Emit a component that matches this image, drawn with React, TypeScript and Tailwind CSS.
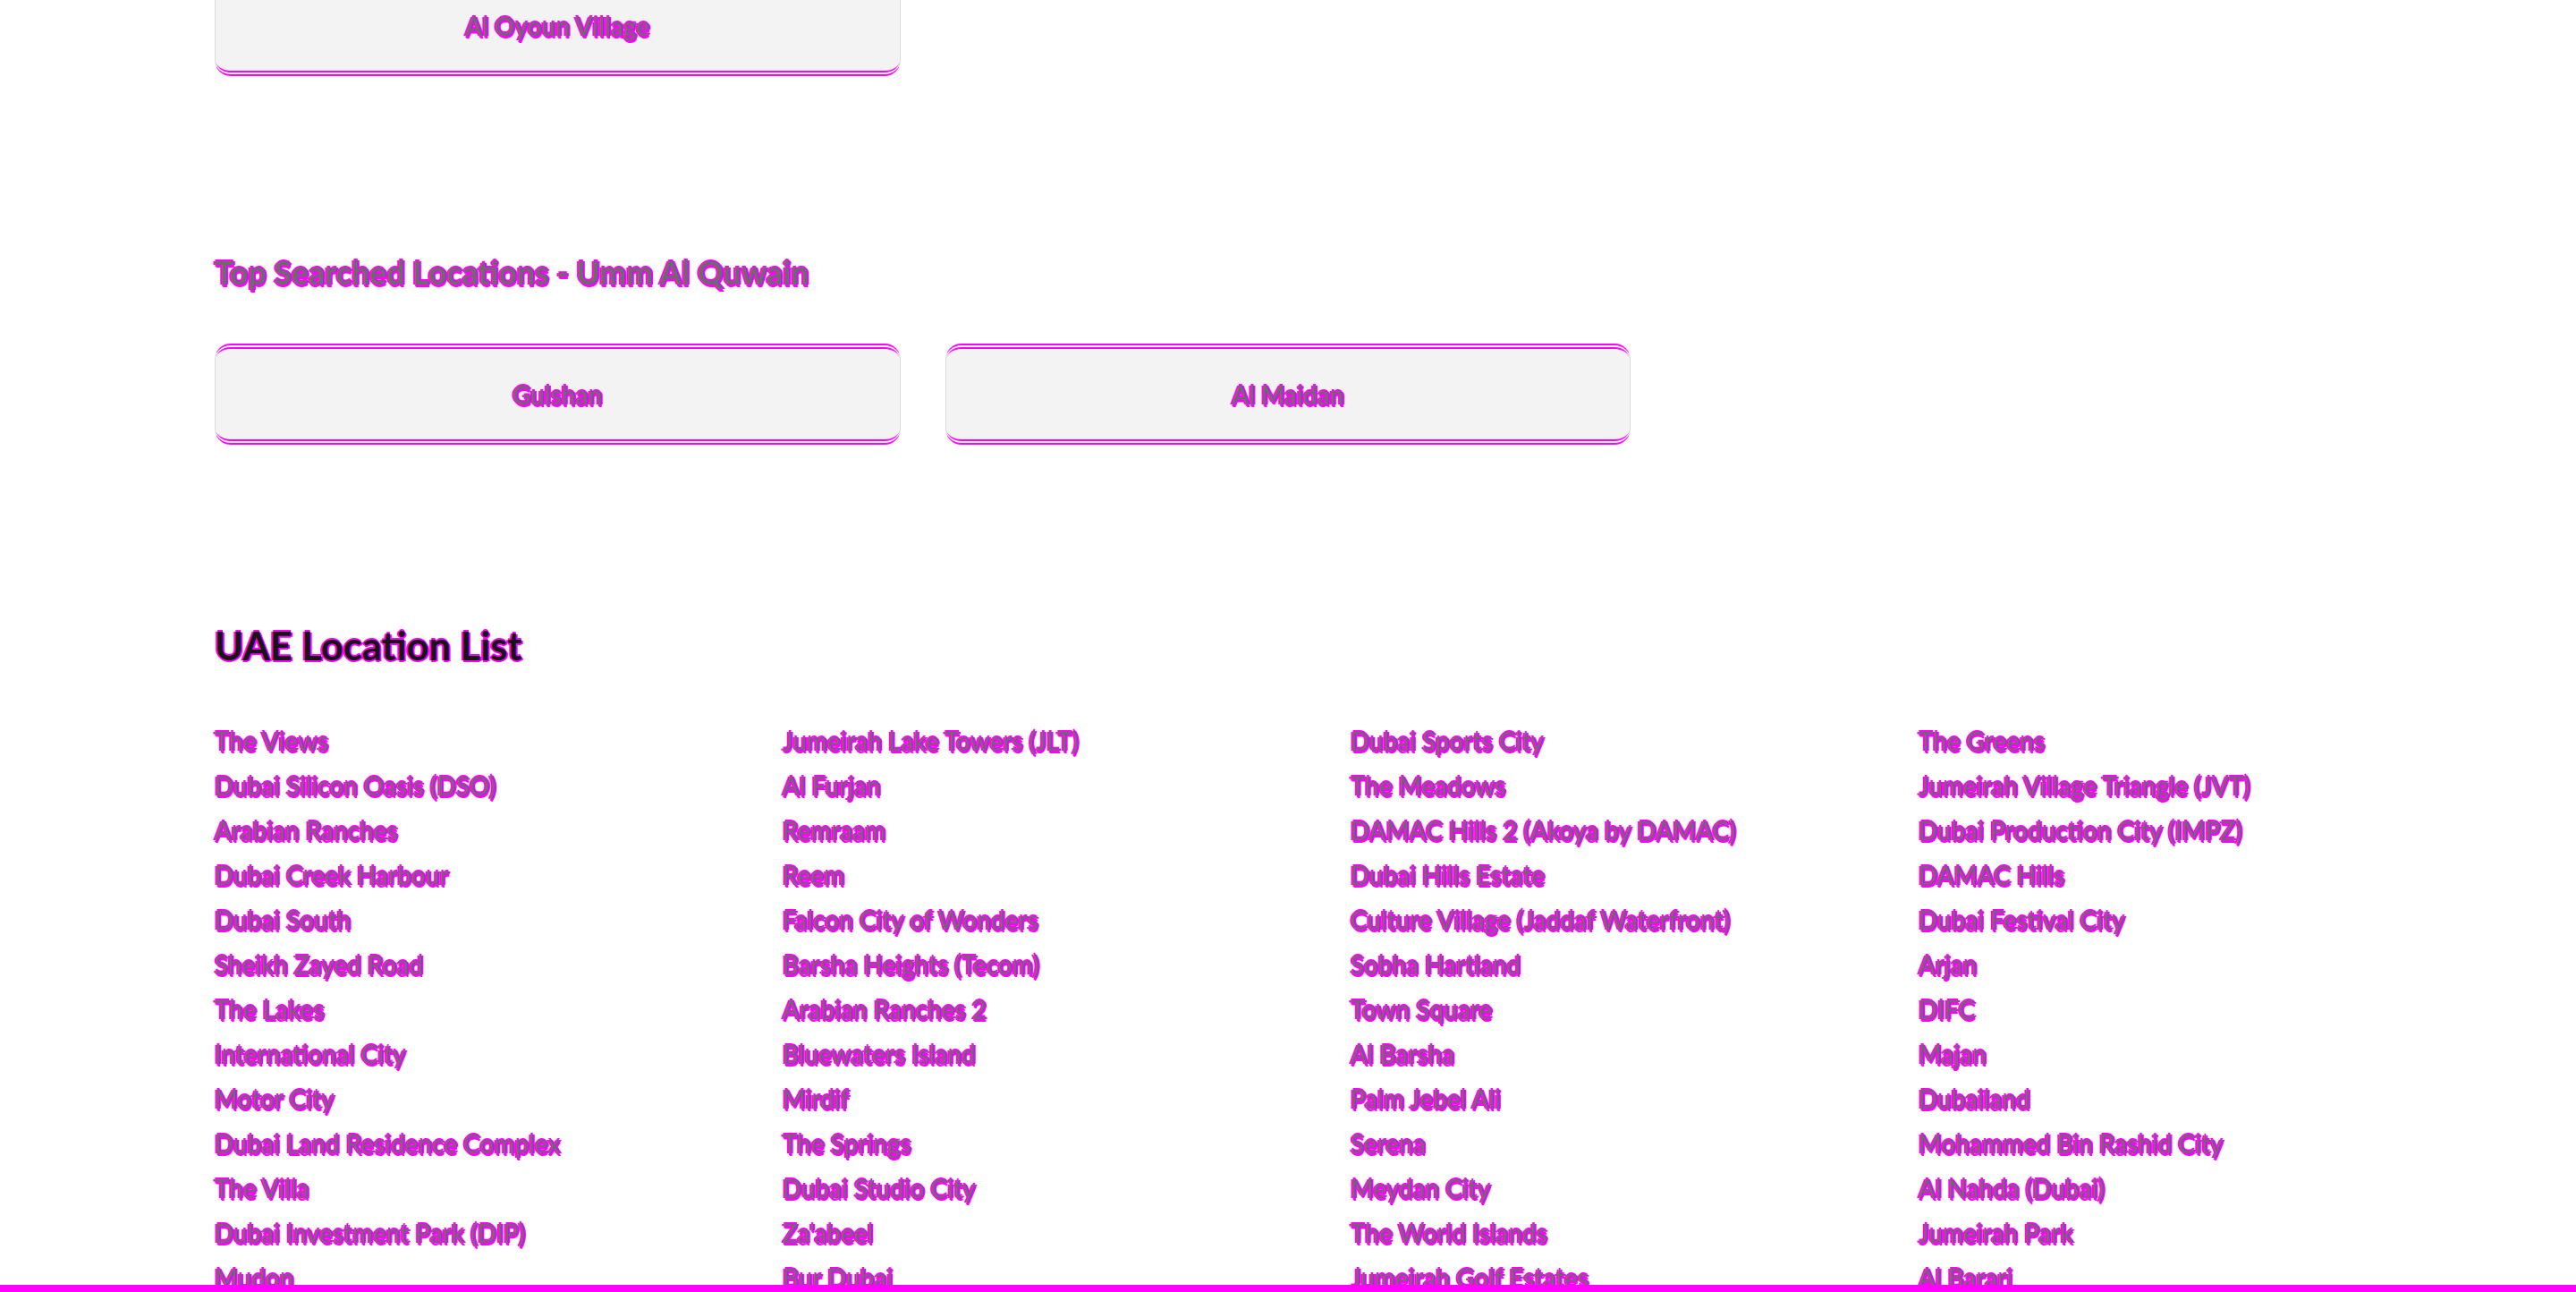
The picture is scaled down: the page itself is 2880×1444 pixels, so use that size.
import React from 'react';

const umm = ['Gulshan', 'Al Maidan'];

const columns: string[][] = [
  [
    'The Views',
    'Dubai Silicon Oasis (DSO)',
    'Arabian Ranches',
    'Dubai Creek Harbour',
    'Dubai South',
    'Sheikh Zayed Road',
    'The Lakes',
    'International City',
    'Motor City',
    'Dubai Land Residence Complex',
    'The Villa',
    'Dubai Investment Park (DIP)',
    'Mudon',
  ],
  [
    'Jumeirah Lake Towers (JLT)',
    'Al Furjan',
    'Remraam',
    'Reem',
    'Falcon City of Wonders',
    'Barsha Heights (Tecom)',
    'Arabian Ranches 2',
    'Bluewaters Island',
    'Mirdif',
    'The Springs',
    'Dubai Studio City',
    "Za'abeel",
    'Bur Dubai',
  ],
  [
    'Dubai Sports City',
    'The Meadows',
    'DAMAC Hills 2 (Akoya by DAMAC)',
    'Dubai Hills Estate',
    'Culture Village (Jaddaf Waterfront)',
    'Sobha Hartland',
    'Town Square',
    'Al Barsha',
    'Palm Jebel Ali',
    'Serena',
    'Meydan City',
    'The World Islands',
    'Jumeirah Golf Estates',
  ],
  [
    'The Greens',
    'Jumeirah Village Triangle (JVT)',
    'Dubai Production City (IMPZ)',
    'DAMAC Hills',
    'Dubai Festival City',
    'Arjan',
    'DIFC',
    'Majan',
    'Dubailand',
    'Mohammed Bin Rashid City',
    'Al Nahda (Dubai)',
    'Jumeirah Park',
    'Al Barari',
  ],
];

// grey glyphs inside a magenta halo, as in the capture
const pink =
  'text-[#6b6b6b] [text-shadow:0_-2px_0_#ff00ff,0_2px_0_#ff00ff,-2px_0_0_#ff00ff,2px_0_0_#ff00ff,1px_3px_0_#ff00ff]';
const halo =
  '[text-shadow:0_-2px_0_#ff00ff,0_2px_0_#ff00ff,-2px_0_0_#ff00ff,2px_1px_0_#ff00ff]';

function LocationCard({ name }: { name: string }) {
  return (
    <a
      href="#"
      className={`flex h-[113px] items-center justify-center rounded-[18px] border-x border-y-[6px] border-double border-x-[#dcdcdc] border-y-[#ff00ff] bg-[#f3f3f3] bg-clip-padding text-[28px] font-semibold ${pink}`}
    >
      {name}
    </a>
  );
}

export default function App() {
  return (
    <div className="min-h-screen overflow-hidden bg-white font-['Lato','Liberation_Sans',sans-serif]">
      <div className="mx-auto -mt-[28px] w-[2400px] pb-20">
        {/* previous emirate, scrolled past */}
        <div className="grid grid-cols-3 gap-x-[50px]">
          <LocationCard name="Al Oyoun Village" />
        </div>

        {/* Umm Al Quwain */}
        <h2 className={`mt-[198px] text-[35.7px] leading-[44px] font-bold ${pink}`}>
          Top Searched Locations - Umm Al Quwain
        </h2>
        <div className="mt-[57px] grid grid-cols-3 gap-x-[50px]">
          {umm.map((n) => (
            <LocationCard key={n} name={n} />
          ))}
        </div>

        {/* Full list */}
        <h2
          className={`mt-[198px] text-[43.5px] leading-[52px] font-bold text-[#151515] ${halo}`}
        >
          UAE Location List
        </h2>
        <div className="mt-[56px] grid grid-cols-4 gap-x-[140px]">
          {columns.map((col, i) => (
            <ul key={i} className="flex flex-col">
              {col.map((name) => (
                <li key={name} className="h-[50px] leading-[50px]">
                  <a href="#" className={`text-[28px] ${pink}`}>
                    {name}
                  </a>
                </li>
              ))}
            </ul>
          ))}
        </div>
      </div>

      {/* bottom strip */}
      <div className="fixed inset-x-0 bottom-0 h-2 bg-[#ff00ff]" />
    </div>
  );
}
